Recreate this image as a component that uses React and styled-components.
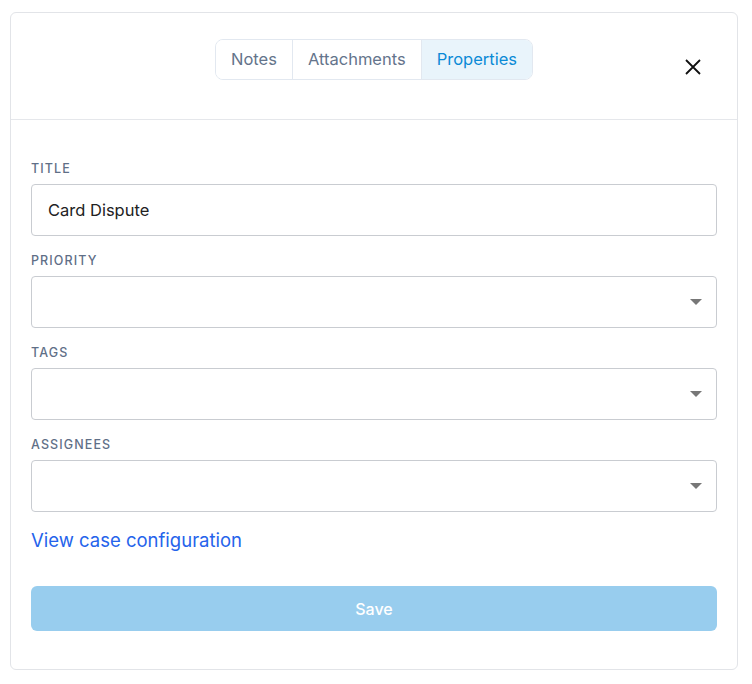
import React from "react";
import styled, { createGlobalStyle } from "styled-components";

const G = createGlobalStyle`
  body { margin: 0; font-family: Inter, "Noto Sans", sans-serif; background: #fff; }
`;
const Page = styled.div`padding: 12px 12px 12px 10px;`;
const Card = styled.div`
  width: 728px; height: 658px; box-sizing: border-box;
  border: 1px solid #e2e4e8; border-radius: 6px; display: flex; flex-direction: column;
`;
const Header = styled.div`
  height: 107px; border-bottom: 1px solid #e5e7eb; display: flex; align-items: center;
  justify-content: center; position: relative; box-sizing: border-box; padding-bottom: 0;
`;
const Tabs = styled.div`
  display: flex; border: 1px solid #e2e8f0; border-radius: 8px; overflow: hidden;
  height: 41px; box-sizing: border-box; margin-top: -14px;
`;
const Tab = styled.div`
  padding: 0 ${p => p.$pad}px; display: flex; align-items: center; font-size: 16.5px;
  color: ${p => p.$active ? "#0b8ad6" : "#64748b"};
  background: ${p => p.$active ? "#e9f4fb" : "#fff"};
  border-left: ${p => p.$first ? "none" : "1px solid #e2e8f0"};
`;
const Close = styled.button`
  position: absolute; right: 34px; top: 44px; border: none; background: none; padding: 0;
  width: 20px; height: 20px; cursor: pointer;
`;
const Body = styled.div`padding: 41px 20px 0 20px; display: flex; flex-direction: column;`;
const Label = styled.div`
  font-size: 12.5px; letter-spacing: 1.1px; color: #5f6f87; font-weight: 500; margin-bottom: 8px;
`;
const Field = styled.div`
  height: 52px; box-sizing: border-box; border: 1px solid #c9ccd1; border-radius: 4px;
  display: flex; align-items: center; padding: 0 16px; font-size: 16.5px; color: #222;
  justify-content: space-between; margin-bottom: 17px;
`;
const Caret = styled.div`
  width: 0; height: 0; border-left: 6px solid transparent; border-right: 6px solid transparent;
  border-top: 6px solid #777; margin-right: -2px;
`;
const Link = styled.a`color: #2563eb; font-size: 18.5px; text-decoration: none; margin-top: 0;`;
const Save = styled.button`
  margin-top: 35px; height: 45px; border: none; border-radius: 6px; background: #98cdee;
  color: #fff; font-family: inherit; font-size: 16px; font-weight: 500;
`;

export default function App() {
  const sel = ["PRIORITY", "TAGS", "ASSIGNEES"];
  return (
    <Page><G />
      <Card>
        <Header>
          <Tabs>
            <Tab $first $pad={15}>Notes</Tab>
            <Tab $pad={15}>Attachments</Tab>
            <Tab $active $pad={15}>Properties</Tab>
          </Tabs>
          <Close aria-label="close">
            <svg width="20" height="20" viewBox="0 0 20 20"><path d="M3 3L17 17M17 3L3 17" stroke="#111" strokeWidth="1.8" /></svg>
          </Close>
        </Header>
        <Body>
          <Label>TITLE</Label>
          <Field>Card Dispute</Field>
          {sel.map(s => (
            <React.Fragment key={s}>
              <Label>{s}</Label>
              <Field><span /><Caret /></Field>
            </React.Fragment>
          ))}
          <Link href="#">View case configuration</Link>
          <Save>Save</Save>
        </Body>
      </Card>
    </Page>
  );
}
